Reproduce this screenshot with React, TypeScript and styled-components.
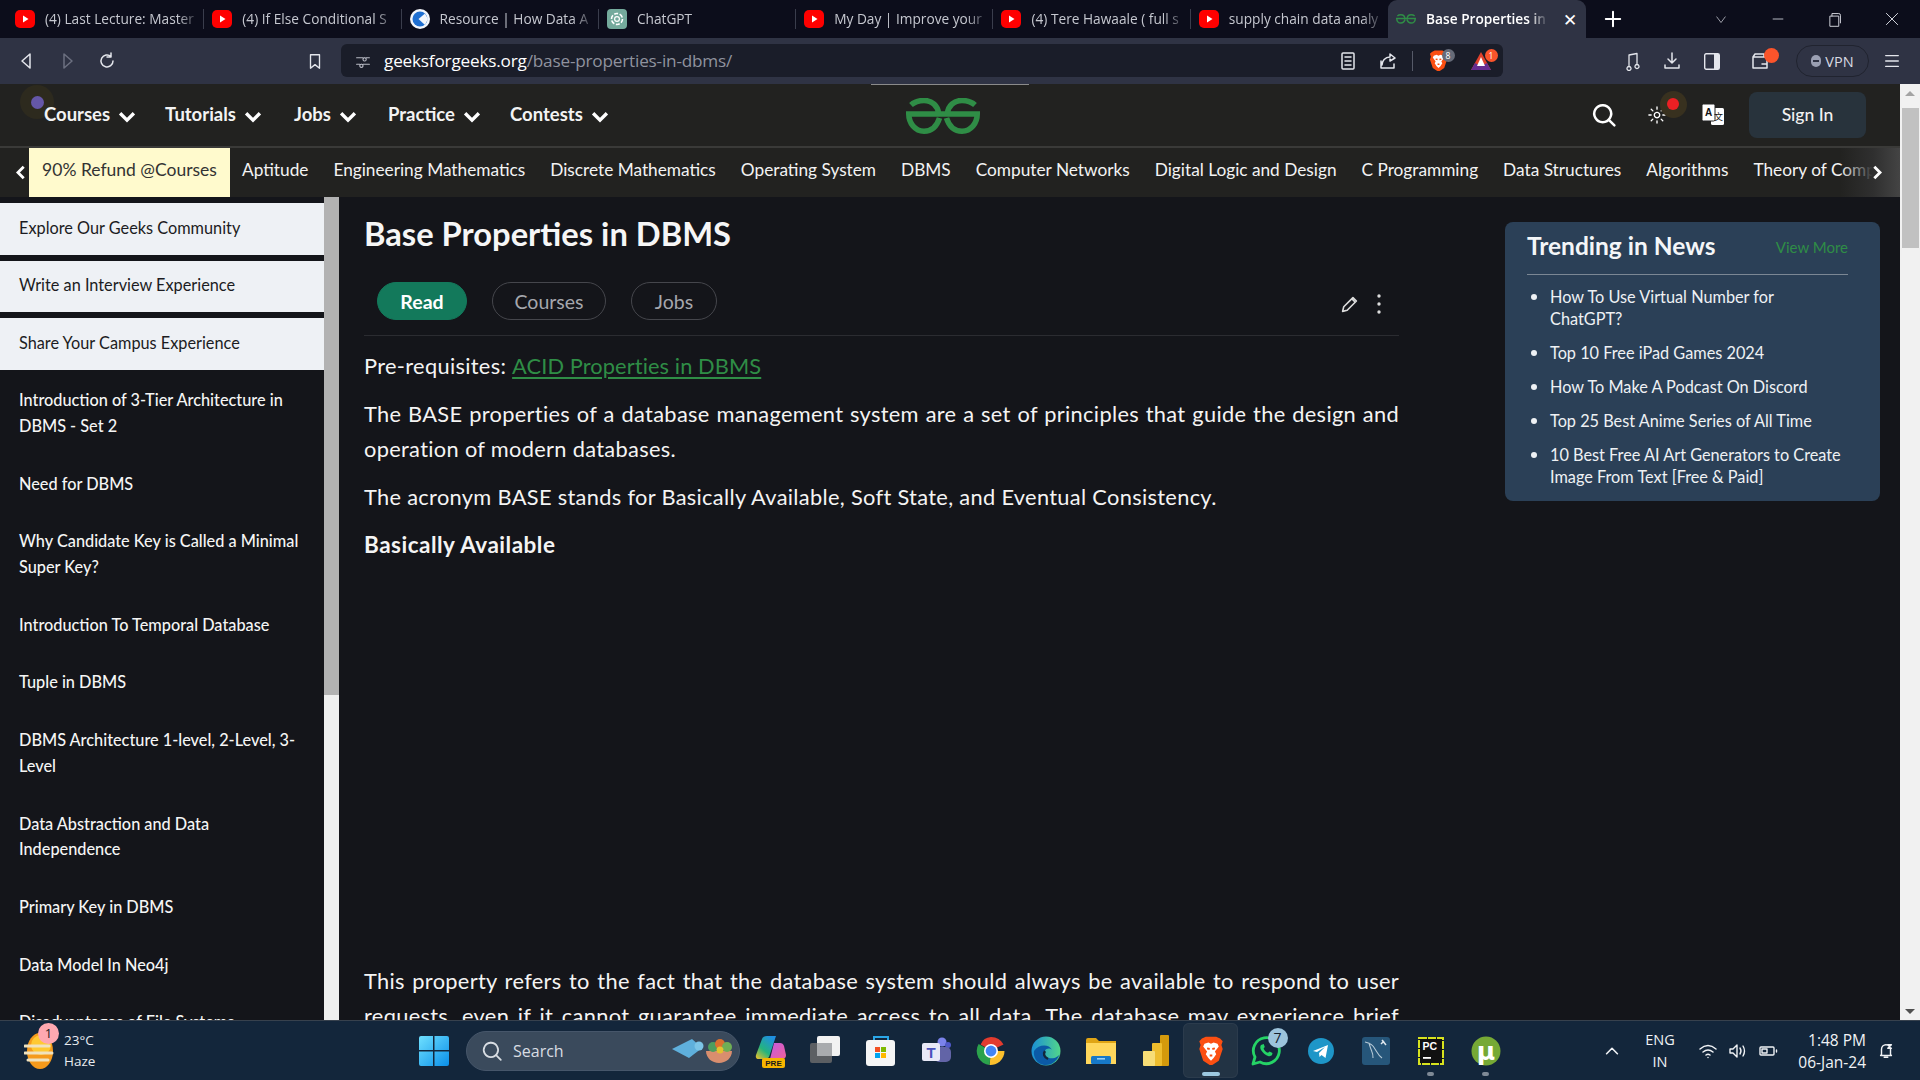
import React from "react";
import styled, { createGlobalStyle } from "styled-components";

const Global = createGlobalStyle`
  html, body { margin: 0; padding: 0; background: #14151a; overflow: hidden; }
  * { box-sizing: border-box; }
`;

const SANS = `"Lato", "Noto Sans", sans-serif`;
const UI = `"Open Sans", "Noto Sans", sans-serif`;

const Screen = styled.div`
  width: 1920px; height: 1080px; display: flex; flex-direction: column; overflow: hidden;
  font-family: ${UI}; color: #fff;
`;

/* ---------- tab strip ---------- */
const TabStrip = styled.div`
  height: 38px; flex: none; display: flex; align-items: stretch; padding-left: 7px; background: #0c0d1b;
`;
const Tab = styled.div<{ $active?: boolean; $sep?: boolean }>`
  width: ${p => (p.$active ? 198 : 197.3)}px; flex: none; display: flex; align-items: center; padding-left: 8px; gap: 10px;
  font-size: 13.7px; color: ${p => (p.$active ? "#fff" : "#c6c8d0")}; font-weight: ${p => (p.$active ? 600 : 400)};
  background: ${p => (p.$active ? "#2f3344" : "transparent")};
  border-radius: ${p => (p.$active ? "9px 9px 0 0" : "0")};
  position: relative;
  ${p => p.$sep ? `&::after { content: ""; position: absolute; right: 0; top: 9px; height: 20px; width: 1px; background: #3a3d4c; }` : ""}
`;
const TabLabel = styled.span<{ $w: number }>`
  width: ${p => p.$w}px; overflow: hidden; white-space: nowrap; padding-bottom: 1px;
  -webkit-mask-image: linear-gradient(90deg, #000 85%, transparent);
  mask-image: linear-gradient(90deg, #000 85%, transparent);
`;
const CloseTab = styled.span`
  font-size: 17px; line-height: 1; color: #fff; margin-left: 5px; font-weight: 400;
`;
const NewTab = styled.div`
  width: 28px; display: flex; align-items: center; justify-content: center; margin-left: 13px; color: #fff;
`;
const WinControls = styled.div`
  margin-left: auto; display: flex; align-items: center; color: #d8dae2;
`;
const WinBtn = styled.div`
  width: 57px; height: 38px; display: flex; align-items: center; justify-content: center;
`;

/* ---------- toolbar ---------- */
const Toolbar = styled.div`
  height: 46px; flex: none; background: #2f3344; display: flex; align-items: center; position: relative; padding-left: 7px;
`;
const ToolBtn = styled.div<{ $w?: number; $dim?: boolean; $end?: boolean; $gapLeft?: number }>`
  width: ${p => p.$w ?? 40}px; height: 34px; flex: none; display: flex; align-items: center;
  justify-content: ${p => (p.$end ? "flex-end" : "center")}; padding-right: ${p => (p.$end ? 10 : 0)}px;
  margin-left: ${p => p.$gapLeft ?? 0}px;
  color: ${p => (p.$dim ? "#6c7080" : "#e4e6ec")}; position: relative;
`;
const UrlBar = styled.div`
  width: 1162px; height: 33px; flex: none; margin-left: 7px; margin-top: -1px; background: #1a1d29; border-radius: 6px;
  display: flex; align-items: center; padding-left: 14px; color: #b8bac4;
`;
const UrlText = styled.div`
  margin-left: 13px; padding-bottom: 1px; font-size: 17.2px; letter-spacing: -0.2px; color: #fff; white-space: nowrap; flex: 1;
`;
const UrlPath = styled.span` color: #8f929e; `;
const UrlDivider = styled.div` width: 1px; height: 20px; background: #565a68; margin: 0 4px 0 7px; `;
const CountDot = styled.span<{ $bg: string; $size: number; $x: number; $y: number }>`
  position: absolute; left: ${p => p.$x}px; top: ${p => p.$y}px; width: ${p => p.$size}px; height: ${p => p.$size}px; border-radius: 50%;
  background: ${p => p.$bg}; color: #fff; font-size: 8.5px; line-height: ${p => p.$size}px; text-align: center;
`;
const VpnPill = styled.div`
  width: 73px; height: 32px; border: 1px solid #20232f; border-radius: 16px; display: flex; align-items: center; justify-content: center; gap: 4px;
  font-size: 14.5px; color: #d8dae2; margin-left: 8px; flex: none;
`;
const VpnDot = styled.span`
  width: 10px; height: 12px; border-radius: 5px; background: #9a9fb2; position: relative;
  &::after { content: ""; position: absolute; left: 2px; right: 2px; top: 5px; height: 2px; background: #2f3344; }
`;

/* ---------- page ---------- */
const PageWrap = styled.div` flex: 1; min-height: 0; display: flex; background: #14151a; `;
const PageMain = styled.div` flex: 1; min-width: 0; display: flex; flex-direction: column; `;
const PageScroll = styled.div`
  width: 20px; flex: none; background: #f1f1f1; display: flex; flex-direction: column; align-items: center; position: relative;
`;
const ScrollArrow = styled.div<{ $down?: boolean }>`
  width: 0; height: 0; border-left: 5px solid transparent; border-right: 5px solid transparent;
  ${p => (p.$down ? "border-top: 5px solid #505050; margin-top: auto; margin-bottom: 6px;" : "border-bottom: 5px solid #a3a3a3; margin-top: 7px;")}
`;
const ScrollThumb = styled.div` width: 17px; height: 140px; background: #c1c1c1; margin-top: 12px; `;

const Header = styled.header`
  height: 64px; flex: none; background: #222220; border-bottom: 2px solid #3a3a38; display: flex; align-items: center; position: relative; padding: 0 0 0 44px;
`;
const NavDot = styled.div`
  position: absolute; left: 20px; top: 1px; width: 34px; height: 34px; border-radius: 50%; background: #2d2a1e;
  &::after { content: ""; position: absolute; left: 11px; top: 11px; width: 13px; height: 13px; border-radius: 50%; background: #6557a8; }
`;
const NavItem = styled.div<{ $w: number }>`
  width: ${p => p.$w}px; flex: none; display: flex; align-items: center; gap: 8px; font-family: ${SANS}; font-weight: 700; font-size: 18.5px; color: #f3f3f3; padding-bottom: 2px;
  position: relative; z-index: 1;
  svg { margin-top: 6px; }
`;
const LogoSlot = styled.div`
  position: absolute; left: 871px; top: 0; width: 158px; height: 62px; padding-left: 35px; border-top: 1px solid #8b8b8b; display: flex; align-items: center;
`;
const HeaderRight = styled.div` margin-left: auto; display: flex; align-items: center; padding-right: 34px; `;
const HeaderIcon = styled.div<{ $w: number }>` width: ${p => p.$w}px; height: 46px; display: flex; align-items: center; justify-content: center; position: relative; color: #fff; `;
const ThemeHalo = styled.div`
  position: absolute; left: 36px; top: -1px; width: 27px; height: 27px; border-radius: 50%; background: #38311f;
  &::after { content: ""; position: absolute; left: 7px; top: 7px; width: 12px; height: 12px; border-radius: 50%; background: #ec2024; }
`;
const SignIn = styled.div`
  width: 117px; height: 46px; margin-left: 13px; padding-bottom: 2px; background: #28333c; border-radius: 8px; display: flex; align-items: center; justify-content: center;
  font-family: ${SANS}; font-size: 17.5px; font-weight: 500; color: #f2f2f2;
`;

const SubNav = styled.nav`
  height: 49px; flex: none; background: #222220; display: flex; align-items: stretch; position: relative; overflow: hidden; padding-left: 29px;
`;
const Highlight = styled.div`
  width: 201px; flex: none; background: #fffacd; color: #333; display: flex; align-items: center; justify-content: center;
  font-family: ${SANS}; font-size: 17.5px; margin-right: 12px; padding-bottom: 7px;
`;
const SubItems = styled.div`
  display: flex; align-items: center; gap: 25px; white-space: nowrap; font-family: ${SANS}; font-size: 17.25px; color: #f3f3f3; padding-bottom: 7px;
`;
const SubArrow = styled.div<{ $right?: boolean }>`
  position: absolute; top: 0; bottom: 0; ${p => (p.$right ? "right: 0; width: 60px; justify-content: flex-end; padding-right: 16px; background: linear-gradient(90deg, transparent, #2f2f2f 55%, #444 100%);" : "left: 0; width: 29px; justify-content: center; padding-left: 14px;")}
  display: flex; align-items: center; color: #fff;
`;

const Body = styled.div` flex: 1; min-height: 0; display: flex; overflow: hidden; `;
const Sidebar = styled.aside`
  width: 339px; flex: none; display: flex; overflow: hidden;
`;
const SideList = styled.div` width: 324px; flex: none; padding-top: 6px; display: flex; flex-direction: column; gap: 6px; `;
const SideItem = styled.div<{ $light?: boolean }>`
  padding: 11.500px 20px 14.200px 19px; font-family: ${SANS}; font-size: 16.3px; line-height: 25.900px; font-weight: ${p => (p.$light ? 400 : 500)};
  color: ${p => (p.$light ? "#1c1c22" : "#f5f5f5")}; background: ${p => (p.$light ? "#eef1f5" : "transparent")};
`;
const SideScroll = styled.div`
  width: 15px; flex: none; background: linear-gradient(180deg, #b2b2b2 0 498px, #efefef 498px);
`;

const Article = styled.main` width: 1035px; flex: none; margin-left: 25px; `;
const Title = styled.h1`
  margin: 0; height: 76px; font-family: ${SANS}; font-size: 32.7px; font-weight: 700; line-height: 74px; color: #f6f6f6;
`;
const PillRow = styled.div`
  height: 63px; padding: 9px 0 0 13px; display: flex; gap: 25px; border-bottom: 1px solid #2b2c31; position: relative;
`;
const Pill = styled.div<{ $on?: boolean; $w: number }>`
  width: ${p => p.$w}px; height: 38px; border-radius: 19px; display: flex; align-items: center; justify-content: center;
  font-family: ${SANS}; font-size: 19.5px; font-weight: ${p => (p.$on ? 700 : 400)};
  color: ${p => (p.$on ? "#fff" : "#a5a7ad")}; background: ${p => (p.$on ? "#13795b" : "transparent")};
  border: 1px solid ${p => (p.$on ? "#13795b" : "#45464c")};
`;
const PillTools = styled.div`
  margin-left: auto; display: flex; align-items: center; gap: 16px; margin-right: 18px; height: 40px; margin-top: 2px; color: #ddd;
`;
const Para = styled.p<{ $gapTop?: number }>`
  margin: ${p => p.$gapTop ?? 13}px 0 0; font-family: ${SANS}; font-size: 21.8px; letter-spacing: 0.32px; line-height: 35px; color: #f4f4f4; text-align: justify;
`;
const ParaTight = styled(Para)` text-align: left; `;
const AcidLink = styled.a`
  color: #2f8d46; text-decoration: underline; text-underline-offset: 3px; letter-spacing: 0.1px;
`;
const Strong = styled.h3`
  margin: 13px 0 0; font-family: ${SANS}; font-size: 22.5px; letter-spacing: 0.5px; font-weight: 700; line-height: 35px; color: #f4f4f4;
`;
const AdGap = styled.div` height: 401px; `;

const Aside = styled.aside`
  width: 375px; height: 279px; flex: none; margin: 25px 0 0 106px; border-radius: 8px; background: #2b4057; padding: 0 32px 0 22px;
`;
const TrendHead = styled.div`
  height: 53px; padding-bottom: 5px; border-bottom: 1px solid #7b8794; display: flex; align-items: center; justify-content: space-between;
`;
const TrendTitle = styled.div` font-family: ${SANS}; font-weight: 700; font-size: 24.5px; color: #f4f6f8; `;
const ViewMore = styled.div` font-family: ${SANS}; font-size: 15px; color: #2f8d46; padding-top: 2px; `;
const TrendList = styled.ul` list-style: none; margin: 10.500px 0 0; padding: 0; `;
const TrendItem = styled.li`
  position: relative; padding-left: 23px; margin-bottom: 11.400px; font-family: ${SANS}; font-size: 16.3px; line-height: 22.500px; color: #eef1f4;
  &::before { content: ""; position: absolute; left: 4px; top: 8px; width: 6px; height: 6px; border-radius: 50%; background: #eef1f4; }
`;

/* ---------- taskbar ---------- */
const Taskbar = styled.footer`
  height: 60px; flex: none; background: #13263b; border-top: 1px solid #37414d; display: flex; align-items: center; position: relative;
`;
const Weather = styled.div` width: 406px; flex: none; padding-left: 24px; display: flex; align-items: center; gap: 10px; position: relative; `;
const WeatherText = styled.div` font-size: 13.500px; line-height: 21px; color: #e8ebef; `;
const WeatherBadge = styled.span`
  position: absolute; left: 38px; top: -7px; width: 21px; height: 21px; border-radius: 50%; background: #ffa8b0; color: #222; font-size: 13px; line-height: 21px; text-align: center;
`;
const TaskCell = styled.div<{ $active?: boolean }>`
  width: 55px; height: 55px; flex: none; display: flex; align-items: center; justify-content: center; position: relative; border-radius: 6px;
  ${p => p.$active ? "background: #223344; box-shadow: inset 0 0 0 1px #2b3b4c;" : ""}
`;
const Running = styled.span<{ $on?: boolean }>`
  position: absolute; bottom: 2px; left: 50%; height: 4px; border-radius: 2px;
  width: ${p => (p.$on ? 18 : 7)}px; margin-left: ${p => (p.$on ? -9 : -3.5)}px; background: ${p => (p.$on ? "#9cc8e0" : "#7f8a96")};
`;
const TaskBadge = styled.span`
  position: absolute; left: 29.500px; top: 5px; width: 20px; height: 20px; border-radius: 50%; background: #9cc3db; color: #14202c; font-size: 14px; line-height: 20px; text-align: center;
`;
const SearchBox = styled.div`
  width: 274px; height: 40px; flex: none; margin: 0 3px 0 5px; border-radius: 20px; background: #3a4a5c; border: 1px solid #46566a;
  display: flex; align-items: center; padding-left: 14px; color: #d8dde3; font-size: 16px; gap: 10px;
`;
const SearchArt = styled.div` margin-left: auto; display: flex; align-items: center; margin-right: 5px; `;
const Tray = styled.div` margin-left: auto; display: flex; align-items: center; padding-right: 21px; color: #f0f2f5; `;
const TrayCell = styled.div<{ $w: number }>` width: ${p => p.$w}px; display: flex; align-items: center; justify-content: center; `;
const Lang = styled.div` width: 52px; font-size: 14.500px; line-height: 22px; text-align: center; margin: 0 7px; `;
const Clock = styled.div` width: 83px; font-size: 15.500px; line-height: 22px; text-align: right; margin-right: 7px; white-space: nowrap; `;

/* ---------- icons ---------- */
const Yt = () => (
  <svg width="20" height="20" viewBox="0 0 20 20"><rect y="1" width="20" height="18" rx="5" fill="#f00" /><path d="M8 6.5 13.5 10 8 13.5z" fill="#fff" /></svg>
);
const Res = () => (
  <svg width="20" height="20" viewBox="0 0 20 20"><circle cx="10" cy="10" r="10" fill="#f3f6fb" /><circle cx="10" cy="10" r="7.5" fill="#1f6fd1" /><path d="M15 4.5 8.5 10l6.5 6 3-6z" fill="#f3f6fb" /></svg>
);
const Gpt = () => (
  <svg width="20" height="20" viewBox="0 0 20 20"><rect width="20" height="20" rx="4" fill="#74aa9c" /><circle cx="10" cy="10" r="5.5" fill="none" stroke="#fff" strokeWidth="1.6" strokeDasharray="4 1.6" /><circle cx="10" cy="10" r="2.4" fill="none" stroke="#fff" strokeWidth="1.2" /></svg>
);
const GfgMark = ({ w, h, color }: { w: number; h: number; color: string }) => (
  <svg width={w} height={h} viewBox="0 0 74 36" fill="none" stroke={color} strokeWidth="5.6">
    <g>
      <path d="M5 7C9 3.5 14 2.500 18 2.500 26 2.500 32 8 32.500 15.500" />
      <path d="M37 16H2.800C2.800 25 9 33.200 18 33.200 26 33.200 31 28 33.500 20" />
    </g>
    <g transform="translate(74 0) scale(-1 1)">
      <path d="M5 7C9 3.500 14 2.500 18 2.500 26 2.500 32 8 32.500 15.500" />
      <path d="M37 16H2.800C2.800 25 9 33.200 18 33.200 26 33.200 31 28 33.500 20" />
    </g>
  </svg>
);
const Chevron = ({ size = 18, dir = "down" }: { size?: number; dir?: "down" | "left" | "right" }) => {
  const d = dir === "down" ? "M2 5l6.5 6.5L15 5" : dir === "left" ? "M11 2 4.5 8.5 11 15" : "M6 2l6.5 6.5L6 15";
  return <svg width={size} height={size} viewBox="0 0 17 17" fill="none" stroke="#fff" strokeWidth="3.2"><path d={d} /></svg>;
};
const Stroke = ({ w = 20, h = 20, d, sw = 1.5, vb = "0 0 20 20" }: { w?: number; h?: number; d: string; sw?: number; vb?: string }) => (
  <svg width={w} height={h} viewBox={vb} fill="none" stroke="currentColor" strokeWidth={sw} strokeLinecap="round" strokeLinejoin="round"><path d={d} /></svg>
);
const BraveShield = ({ s = 20 }: { s?: number }) => (
  <svg width={s} height={s * 1.15} viewBox="0 0 20 23">
    <path d="M3 2 6 .5h8L17 2l2 2-1 3 1 3-3 9-6 4-6-4-3-9 1-3-1-3z" fill="#fb4f12" />
    <path d="M5 6l3-1 2 1 2-1 3 1 1 2-3 4 1 2-2 3-2 2-2-2-2-3 1-2-3-4z" fill="#fff" />
    <path d="M7 9.500l2 .5M13 9.500l-2 .5M9 15h2" stroke="#fb4f12" strokeWidth="1.400" />
  </svg>
);

const Copilot = () => (
  <svg width="36" height="36" viewBox="0 0 36 36">
    <defs>
      <linearGradient id="cpA" x1="0" y1="1" x2="0.7" y2="0"><stop offset="0" stopColor="#f6c026" /><stop offset=".45" stopColor="#24b47e" /><stop offset="1" stopColor="#1f8fe0" /></linearGradient>
      <linearGradient id="cpB" x1="0" y1="0" x2="1" y2="1"><stop offset="0" stopColor="#c45be0" /><stop offset="1" stopColor="#f0609a" /></linearGradient>
    </defs>
    <path d="M3 22 9 6q1-3 5-3h9l-7 21q-1 2-4 2H6q-4 0-3-4z" fill="url(#cpA)" />
    <path d="M21 10h6q3 0 4 3l2 9q0 4-4 4H17z" fill="url(#cpB)" />
    <rect x="9" y="25" width="23" height="10" rx="2" fill="#f7b500" />
    <text x="20.500" y="33" fontSize="8" fontWeight="800" textAnchor="middle" fill="#1a1a1a" fontFamily="Liberation Sans">PRE</text>
  </svg>
);
const TaskView = () => (
  <svg width="32" height="32" viewBox="0 0 32 32"><rect x="0" y="8" width="22" height="20" rx="2" fill="#5c5f63" /><rect x="7" y="1" width="23" height="20" rx="2" fill="#f2f2f2" /><rect x="7" y="8" width="15" height="13" fill="#a9abae" /></svg>
);
const Store = () => (
  <svg width="30" height="32" viewBox="0 0 30 32"><path d="M8 6V2h14v4" fill="none" stroke="#2aa7e8" strokeWidth="2" /><rect y="5" width="29" height="26" rx="3" fill="#f5f5f5" /><rect x="9" y="12" width="5" height="5" fill="#f25022" /><rect x="15" y="12" width="5" height="5" fill="#7fba00" /><rect x="9" y="18" width="5" height="5" fill="#00a4ef" /><rect x="15" y="18" width="5" height="5" fill="#ffb900" /></svg>
);
const Teams = () => (
  <svg width="32" height="30" viewBox="0 0 32 30"><circle cx="22" cy="6" r="4.500" fill="#7b83eb" /><circle cx="28" cy="9" r="3" fill="#5059c9" /><rect x="14" y="11" width="17" height="15" rx="5" fill="#6264a7" /><rect x="2" y="7" width="18" height="18" rx="2" fill="#e8e9f7" /><text x="11" y="22" fontSize="15" fontWeight="700" textAnchor="middle" fill="#4b53bc" fontFamily="Liberation Sans">T</text></svg>
);
const Chrome = () => (
  <svg width="30" height="30" viewBox="0 0 30 30">
    <path d="M15 15 4.600 9A12 12 0 0 1 15 1.500 14 14 0 0 1 27.500 9z" fill="#e33b2e" transform="translate(0 -.5)" />
    <path d="M15 15h13.500A14 14 0 0 1 13.500 29z" fill="#fbc02d" />
    <path d="M15 15 13.500 29A14 14 0 0 1 2.600 8z" fill="#2ba24c" />
    <circle cx="15" cy="15" r="7" fill="#fff" /><circle cx="15" cy="15" r="5.400" fill="#4285f4" />
  </svg>
);
const Edge = () => (
  <svg width="30" height="30" viewBox="0 0 30 30">
    <defs><linearGradient id="egA" x1="0" y1="0" x2="1" y2="0"><stop offset="0" stopColor="#1a8fd6" /><stop offset="1" stopColor="#52d68a" /></linearGradient></defs>
    <circle cx="15" cy="15" r="14.500" fill="url(#egA)" />
    <path d="M29 17c-1 4-6 6-11 5-4-1-5-4-4-7 1-3 5-3 7-1-3-6-13-6-18 1-1 6 3 13 10 14 8 1 14-5 16-12z" fill="#0b5aa6" />
    <path d="M14 15c-2 3-1 6 3 8" fill="none" stroke="#13263b" strokeWidth="2.400" />
  </svg>
);
const Folder = () => (
  <svg width="30" height="28" viewBox="0 0 30 28"><path d="M0 3q0-2 2-2h8l3 3h17v22H0z" fill="#e0a515" /><rect y="6" width="30" height="21" fill="#ffd75c" /><rect x="5" y="19" width="20" height="8" rx="1.500" fill="#1779c9" /><rect x="11" y="21" width="8" height="1.600" fill="#9bd0f5" /></svg>
);
const PowerBi = () => (
  <svg width="26" height="32" viewBox="0 0 26 32"><rect x="17" y="0" width="9" height="31" rx="1" fill="#d49a0c" /><rect x="9" y="8" width="10" height="23" rx="1" fill="#eebd2d" /><rect x="0" y="16" width="12" height="15" rx="1" fill="#f7dd76" /></svg>
);
const WhatsApp = () => (
  <svg width="30" height="30" viewBox="0 0 30 30" fill="none">
    <path d="M2 28l2-7a13 13 0 1 1 5 5z" stroke="#25d366" strokeWidth="2.800" strokeLinejoin="round" />
    <path d="M10 9c-1 1-1 3 0 5 2 3 4 5 7 6 2 .5 3 0 4-1l.5-2-3-1.500-1.500 1.300c-2-.8-3.600-2.400-4.400-4.400l1.200-1.400L12.700 8z" fill="#25d366" />
  </svg>
);
const Telegram = () => (
  <svg width="26" height="26" viewBox="0 0 26 26"><circle cx="13" cy="13" r="13" fill="#1e96c8" /><path d="M5 13 20 7l-2.500 13-4-3-2 2-.5-4 6-6-8 5z" fill="#fff" /></svg>
);
const MySql = () => (
  <svg width="28" height="28" viewBox="0 0 28 28"><rect width="28" height="28" rx="3" fill="#26567a" /><path d="M3 5c5 1 8 3 10 7 2 3 3 6 7 9M7 6c1 4 2 6 3 9 1 2 1 4 1 6" fill="none" stroke="#b5c9d6" strokeWidth="1.100" /><path d="M20 3l4 5M22 4l-3 3" stroke="#dfe8ee" strokeWidth="1.500" /></svg>
);
const PyCharm = () => (
  <svg width="26" height="28" viewBox="0 0 26 28"><rect x="1" y="1" width="24" height="26" fill="#111" stroke="#d7e21e" strokeWidth="2" strokeDasharray="8 1" /><text x="4.500" y="13" fontSize="10.500" fontWeight="700" fill="#fff" fontFamily="Liberation Sans">PC</text><rect x="5" y="20" width="8" height="1.800" fill="#fff" /></svg>
);
const UTorrent = () => (
  <svg width="30" height="30" viewBox="0 0 30 30"><circle cx="15" cy="15" r="14.500" fill="#76a935" /><text x="15" y="24" fontSize="25" fontWeight="700" textAnchor="middle" fill="#fff" fontFamily="DejaVu Sans">µ</text></svg>
);
const WinLogo = () => (
  <svg width="30" height="30" viewBox="0 0 30 30">
    <defs><linearGradient id="wnA" x1="0" y1="0" x2="1" y2="1"><stop offset="0" stopColor="#6fe0ff" /><stop offset="1" stopColor="#0a8fe8" /></linearGradient></defs>
    <path d="M0 2q0-2 2-2h12v14H0zM15.500 0H28q2 0 2 2v12H15.500zM0 15.500h14V30H2q-2 0-2-2zM15.500 15.500H30V28q0 2-2 2H15.500z" fill="url(#wnA)" />
  </svg>
);
const SearchDecor = () => (
  <svg width="62" height="26" viewBox="0 0 62 26">
    <path d="M0 11 20 1l10 9-13 10z" fill="#5fb0dc" /><circle cx="27" cy="8" r="4.500" fill="#7cc4e6" />
    <path d="M34 13h26c0 7-6 12-13 12s-13-5-13-12z" fill="#d98e6e" />
    <circle cx="41" cy="9" r="5" fill="#4c9e5e" /><circle cx="48" cy="6" r="5" fill="#d9702f" /><circle cx="55" cy="9" r="5" fill="#6fae55" /><circle cx="48" cy="12" r="3.500" fill="#e3c12f" />
  </svg>
);
const WeatherIcon = () => (
  <svg width="30" height="42" viewBox="0 0 30 42">
    <ellipse cx="16" cy="21" rx="13" ry="18" fill="#f59a1c" />
    <ellipse cx="17" cy="15" rx="10" ry="10" fill="#ffc933" />
    <path d="M1 16h24M1 23h27M4 30h20" stroke="#f0e2be" strokeWidth="3" strokeLinecap="round" />
  </svg>
);

const tabs = [
  { icon: <Yt />, label: "(4) Last Lecture: Master", sep: true },
  { icon: <Yt />, label: "(4) If Else Conditional S", sep: true },
  { icon: <Res />, label: "Resource | How Data A", sep: true },
  { icon: <Gpt />, label: "ChatGPT", sep: true },
  { icon: <Yt />, label: "My Day | Improve your", sep: true },
  { icon: <Yt />, label: "(4) Tere Hawaale ( full s", sep: true },
  { icon: <Yt />, label: "supply chain data analy", sep: false },
];
const navs = [["Courses", 121], ["Tutorials", 129], ["Jobs", 94], ["Practice", 122], ["Contests", 120]] as const;
const subs = ["Aptitude", "Engineering Mathematics", "Discrete Mathematics", "Operating System", "DBMS", "Computer Networks", "Digital Logic and Design", "C Programming", "Data Structures", "Algorithms", "Theory of Computation"];
const lightItems = ["Explore Our Geeks Community", "Write an Interview Experience", "Share Your Campus Experience"];
const sideItems = ["Introduction of 3-Tier Architecture in DBMS - Set 2", "Need for DBMS", "Why Candidate Key is Called a Minimal Super Key?", "Introduction To Temporal Database", "Tuple in DBMS", "DBMS Architecture 1-level, 2-Level, 3-Level", "Data Abstraction and Data Independence", "Primary Key in DBMS", "Data Model In Neo4j", "Disadvantages of File Systems"];
const news = ["How To Use Virtual Number for ChatGPT?", "Top 10 Free iPad Games 2024", "How To Make A Podcast On Discord", "Top 25 Best Anime Series of All Time", "10 Best Free AI Art Generators to Create Image From Text [Free & Paid]"];

export default function App() {
  return (
    <Screen>
      <Global />
      <TabStrip>
        {tabs.map(t => (
          <Tab key={t.label} $sep={t.sep}>{t.icon}<TabLabel $w={156}>{t.label}</TabLabel></Tab>
        ))}
        <Tab $active>
          <GfgMark w={20} h={10} color="#2f8d46" />
          <TabLabel $w={122}>Base Properties in DBMS</TabLabel>
          <CloseTab>✕</CloseTab>
        </Tab>
        <NewTab><Stroke w={18} h={18} sw={2.200} d="M10 2v16M2 10h16" /></NewTab>
        <WinControls>
          <WinBtn><Stroke w={14} h={14} sw={1} d="M4 7l6 8 6-8" /></WinBtn>
          <WinBtn><Stroke w={14} h={14} sw={1.200} d="M3 10h14" /></WinBtn>
          <WinBtn><Stroke w={17} h={17} sw={1.100} d="M5 6h10v12H5zM7 6V3h8q2 0 2 2v9" /></WinBtn>
          <WinBtn><Stroke w={16} h={16} sw={1.200} d="M3 3l14 14M17 3 3 17" /></WinBtn>
        </WinControls>
      </TabStrip>

      <Toolbar>
        <ToolBtn><Stroke d="M13 3 5 10l8 7z" /></ToolBtn>
        <ToolBtn $dim><Stroke d="M7 3l8 7-8 7z" /></ToolBtn>
        <ToolBtn><Stroke d="M16 10a6 6 0 1 1-2-4.500M14 2v4h-4" /></ToolBtn>
        <ToolBtn $w={207} $end><Stroke w={18} h={20} d="M5 3h10v15l-5-4-5 4z" /></ToolBtn>
        <UrlBar>
          <Stroke w={16} h={16} sw={1.400} d="M2 6h8M14 6h4M2 14h4M10 14h8M12 6a2 2 0 1 0 .01 0M8 14a2 2 0 1 0 .01 0" />
          <UrlText>geeksforgeeks.org<UrlPath>/base-properties-in-dbms/</UrlPath></UrlText>
          <ToolBtn $w={46}><Stroke d="M5 2h10q1 0 1 1v14q0 1-1 1H5q-1 0-1-1V3q0-1 1-1zM7 6h6M7 10h6M7 14h6" /></ToolBtn>
          <ToolBtn $w={34}><Stroke d="M17 7l-5-4v3C7 6 4 10 4 14M3 10v7h13v-4M17 7l-5 3V8" /></ToolBtn>
          <UrlDivider />
          <ToolBtn $w={42}>
            <BraveShield s={19} />
            <CountDot $bg="#666b78" $size={13} $x={24.500} $y={5}>8</CountDot>
          </ToolBtn>
          <ToolBtn $w={44}>
            <svg width="22" height="20" viewBox="0 0 22 20"><path d="M11 1 21 19H1z" fill="#e0402b" /><path d="M1 19l4-7 6 3 6-3 4 7z" fill="#662d91" /><path d="M11 6l4 9H7z" fill="#fff" /></svg>
            <CountDot $bg="#fb542b" $size={13} $x={25.500} $y={5}>1</CountDot>
          </ToolBtn>
        </UrlBar>
        <ToolBtn $gapLeft={109}><Stroke sw={1.300} d="M7 15V4l8-1.500V13M7 15.500a2 2 0 1 1-.01 0M15 13.500a2 2 0 1 1-.01 0" /></ToolBtn>
        <ToolBtn><Stroke d="M10 2v10M6 8l4 4 4-4M3 14v3h14v-3" /></ToolBtn>
        <ToolBtn><svg width="16" height="17" viewBox="0 0 16 17"><rect x=".7" y=".7" width="14.600" height="15.600" rx="1.500" fill="none" stroke="#e4e6ec" strokeWidth="1.400" /><rect x="10" y="1" width="5" height="15" fill="#e4e6ec" /></svg></ToolBtn>
        <ToolBtn $w={56}>
          <Stroke d="M3 6h14v11H3zM3 6l2-3h9v3M12 13h5" />
          <CountDot $bg="#fb542b" $size={15} $x={31.500} $y={4}> </CountDot>
        </ToolBtn>
        <VpnPill><VpnDot />VPN</VpnPill>
        <ToolBtn $w={46}><Stroke w={18} h={18} d="M3 4h14M3 10h14M3 16h14" /></ToolBtn>
      </Toolbar>

      <PageWrap>
        <PageMain>
          <Header>
            <NavDot />
            {navs.map(([n, w]) => (
              <NavItem key={n} $w={w}>{n}<Chevron /></NavItem>
            ))}
            <LogoSlot><GfgMark w={74} h={36} color="#2f8d46" /></LogoSlot>
            <HeaderRight>
              <HeaderIcon $w={40}><Stroke w={26} h={26} sw={1.900} d="M9 2.500a6.500 6.500 0 1 0 .01 0M13.500 13.500 18 18" /></HeaderIcon>
              <HeaderIcon $w={66}>
                <Stroke w={18} h={18} sw={1.500} d="M10 7a3 3 0 1 0 .01 0M10 1v2.500M10 16.500V19M1 10h2.500M16.500 10H19M3.600 3.600l1.800 1.800M14.600 14.600l1.800 1.800M3.600 16.400l1.800-1.800M14.600 5.400l1.800-1.800" />
                <ThemeHalo />
              </HeaderIcon>
              <HeaderIcon $w={46}>
                <svg width="22" height="22" viewBox="0 0 22 22"><rect x="9" y="4" width="13" height="17" rx="1.500" fill="#fff" /><rect width="13" height="17" rx="1.500" fill="#fff" stroke="#222" /><text x="6.500" y="12" fontSize="10" fontWeight="700" textAnchor="middle" fill="#111" fontFamily="Liberation Sans">A</text><text x="16.500" y="16" fontSize="9" textAnchor="middle" fill="#111" fontFamily="Noto Sans CJK SC">文</text></svg>
              </HeaderIcon>
              <SignIn>Sign In</SignIn>
            </HeaderRight>
          </Header>
          <SubNav>
            <SubArrow><Chevron size={15} dir="left" /></SubArrow>
            <Highlight>90% Refund @Courses</Highlight>
            <SubItems>{subs.map(s => <span key={s}>{s}</span>)}</SubItems>
            <SubArrow $right><Chevron size={15} dir="right" /></SubArrow>
          </SubNav>
          <Body>
            <Sidebar>
              <SideList>
                {lightItems.map(i => <SideItem key={i} $light>{i}</SideItem>)}
                {sideItems.map(i => <SideItem key={i}>{i}</SideItem>)}
              </SideList>
              <SideScroll />
            </Sidebar>
            <Article>
              <Title>Base Properties in DBMS</Title>
              <PillRow>
                <Pill $on $w={90}>Read</Pill>
                <Pill $w={114}>Courses</Pill>
                <Pill $w={86}>Jobs</Pill>
                <PillTools>
                  <Stroke w={23} h={23} sw={1.400} d="M4 16l1-4 8-8 3 3-8 8zM12 5l3 3" />
                  <svg width="4" height="22" viewBox="0 0 4 22"><circle cx="2" cy="3" r="1.700" fill="#ddd" /><circle cx="2" cy="11" r="1.700" fill="#ddd" /><circle cx="2" cy="19" r="1.700" fill="#ddd" /></svg>
                </PillTools>
              </PillRow>
              <ParaTight $gapTop={12}>Pre-requisites: <AcidLink>ACID Properties in DBMS</AcidLink></ParaTight>
              <Para>The BASE properties of a database management system are a set of principles that guide the design and operation of modern databases.</Para>
              <Para>The acronym BASE stands for Basically Available, Soft State, and Eventual Consistency.</Para>
              <Strong>Basically Available</Strong>
              <AdGap />
              <Para $gapTop={0}>This property refers to the fact that the database system should always be available to respond to user requests, even if it cannot guarantee immediate access to all data. The database may experience brief periods of unavailability.</Para>
            </Article>
            <Aside>
              <TrendHead>
                <TrendTitle>Trending in News</TrendTitle>
                <ViewMore>View More</ViewMore>
              </TrendHead>
              <TrendList>{news.map(n => <TrendItem key={n}>{n}</TrendItem>)}</TrendList>
            </Aside>
          </Body>
        </PageMain>
        <PageScroll>
          <ScrollArrow />
          <ScrollThumb />
          <ScrollArrow $down />
        </PageScroll>
      </PageWrap>

      <Taskbar>
        <Weather>
          <WeatherIcon />
          <WeatherBadge>1</WeatherBadge>
          <WeatherText>23°C<br />Haze</WeatherText>
        </Weather>
        <TaskCell><WinLogo /></TaskCell>
        <SearchBox>
          <Stroke w={22} h={22} sw={1.600} d="M9 2.500a6.500 6.500 0 1 0 .01 0M13.500 13.500 18 18" />
          Search
          <SearchArt><SearchDecor /></SearchArt>
        </SearchBox>
        <TaskCell><Copilot /></TaskCell>
        <TaskCell><TaskView /></TaskCell>
        <TaskCell><Store /></TaskCell>
        <TaskCell><Teams /></TaskCell>
        <TaskCell><Chrome /></TaskCell>
        <TaskCell><Edge /></TaskCell>
        <TaskCell><Folder /></TaskCell>
        <TaskCell><PowerBi /></TaskCell>
        <TaskCell $active><BraveShield s={26} /><Running $on /></TaskCell>
        <TaskCell><WhatsApp /><TaskBadge>7</TaskBadge></TaskCell>
        <TaskCell><Telegram /></TaskCell>
        <TaskCell><MySql /></TaskCell>
        <TaskCell><PyCharm /><Running /></TaskCell>
        <TaskCell><UTorrent /><Running /></TaskCell>
        <Tray>
          <TrayCell $w={30}><Stroke w={18} h={18} sw={1.800} d="M4 13l6-6 6 6" /></TrayCell>
          <Lang>ENG<br />IN</Lang>
          <TrayCell $w={30}><Stroke w={20} h={20} sw={1.500} d="M2 8q8-7 16 0M5 11q5-4 10 0M8 14q2-1.500 4 0M10 16.500h.01" /></TrayCell>
          <TrayCell $w={30}><Stroke w={20} h={20} sw={1.400} d="M2 8v4h3l4 4V4L5 8zM12 7q2 3 0 6M15 5q3 5 0 10" /></TrayCell>
          <TrayCell $w={30}><Stroke w={20} h={20} sw={1.400} d="M3 6h12q1 0 1 1v6q0 1-1 1H3q-1 0-1-1V7q0-1 1-1zM18.500 9v2M4 8h5v4H4z" /></TrayCell>
          <Clock>1:48 PM<br />06-Jan-24</Clock>
          <TrayCell $w={26}><Stroke w={18} h={20} sw={1.600} d="M5 14V8a5 5 0 0 1 10 0v6l1 1H4zM8 17h4M12 3h4l-4 4h4" /></TrayCell>
        </Tray>
      </Taskbar>
    </Screen>
  );
}
